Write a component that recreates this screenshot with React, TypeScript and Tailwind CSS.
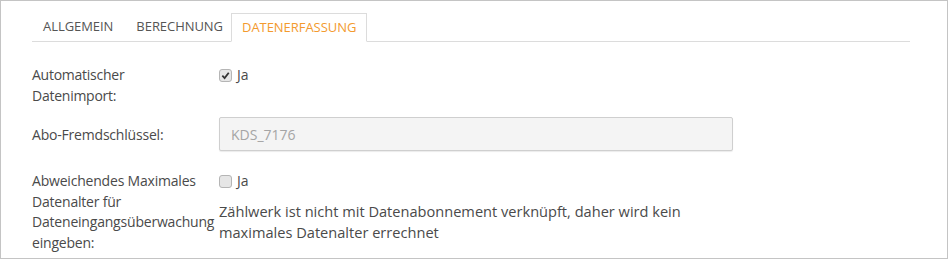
import React from "react";

function Check({ checked }: { checked: boolean }) {
  return (
    <span className="inline-flex h-[13px] w-[13px] items-center justify-center rounded-[3px] border border-[#b5b5b5] bg-[#e6e6e6]">
      {checked && (
        <svg width="9" height="9" viewBox="0 0 10 10">
          <path d="M1.5 5.2 L4 7.8 L8.6 2" fill="none" stroke="#333" strokeWidth="2" />
        </svg>
      )}
    </span>
  );
}

export default function App() {
  return (
    <div
      className="box-border h-[259px] w-[948px] border border-[#c4c4c4] bg-white pl-[31px] pr-[37px] pt-[12px] text-[14px] text-[#4a4a4a]"
      style={{ fontFamily: '"Open Sans", sans-serif' }}
    >
      <div className="flex h-[29px] items-end border-b border-[#dcdcdc] text-[13px] uppercase tracking-[-0.05px]">
        <div className="flex h-[28px] items-center pl-[11px] pr-[11px] text-[#555]">Allgemein</div>
        <div className="flex h-[28px] items-center pl-[12px] pr-[8px] text-[#555]">Berechnung</div>
        <div className="-mb-px flex h-[29px] items-center border border-b-white border-[#dcdcdc] bg-white px-[10px] text-[#f39a2e]">
          Datenerfassung
        </div>
      </div>

      <div className="mt-[23px] flex leading-[20.5px]">
        <div className="w-[187px] tracking-[-0.25px]">
          Automatischer
          <br />
          Datenimport:
        </div>
        <label className="flex h-[20px] items-center gap-[5px]">
          <Check checked />
          <span>Ja</span>
        </label>
      </div>

      <div className="mt-[11px] flex items-center leading-[21px]">
        <div className="w-[187px] tracking-[-0.2px]">Abo-Fremdschlüssel:</div>
        <div className="flex h-[34px] w-[514px] items-center rounded-[2px] border border-[#cfcfcf] bg-[#f4f4f4] px-[11px] text-[#a5a5a5] shadow-[0_1px_1px_rgba(0,0,0,0.08)]">
          KDS_7176
        </div>
      </div>

      <div className="mt-[20px] flex leading-[20.5px]">
        <div className="w-[187px] tracking-[-0.2px]">
          Abweichendes Maximales
          <br />
          Datenalter für
          <br />
          Dateneingangsüberwachung
          <br />
          eingeben:
        </div>
        <div className="flex flex-col">
          <label className="flex h-[20px] items-center gap-[5px]">
            <Check checked={false} />
            <span>Ja</span>
          </label>
          <div className="mt-[10px] text-[14.6px] leading-[20.5px]">
            Zählwerk ist nicht mit Datenabonnement verknüpft, daher wird kein
            <br />
            maximales Datenalter errechnet
          </div>
        </div>
      </div>
    </div>
  );
}
